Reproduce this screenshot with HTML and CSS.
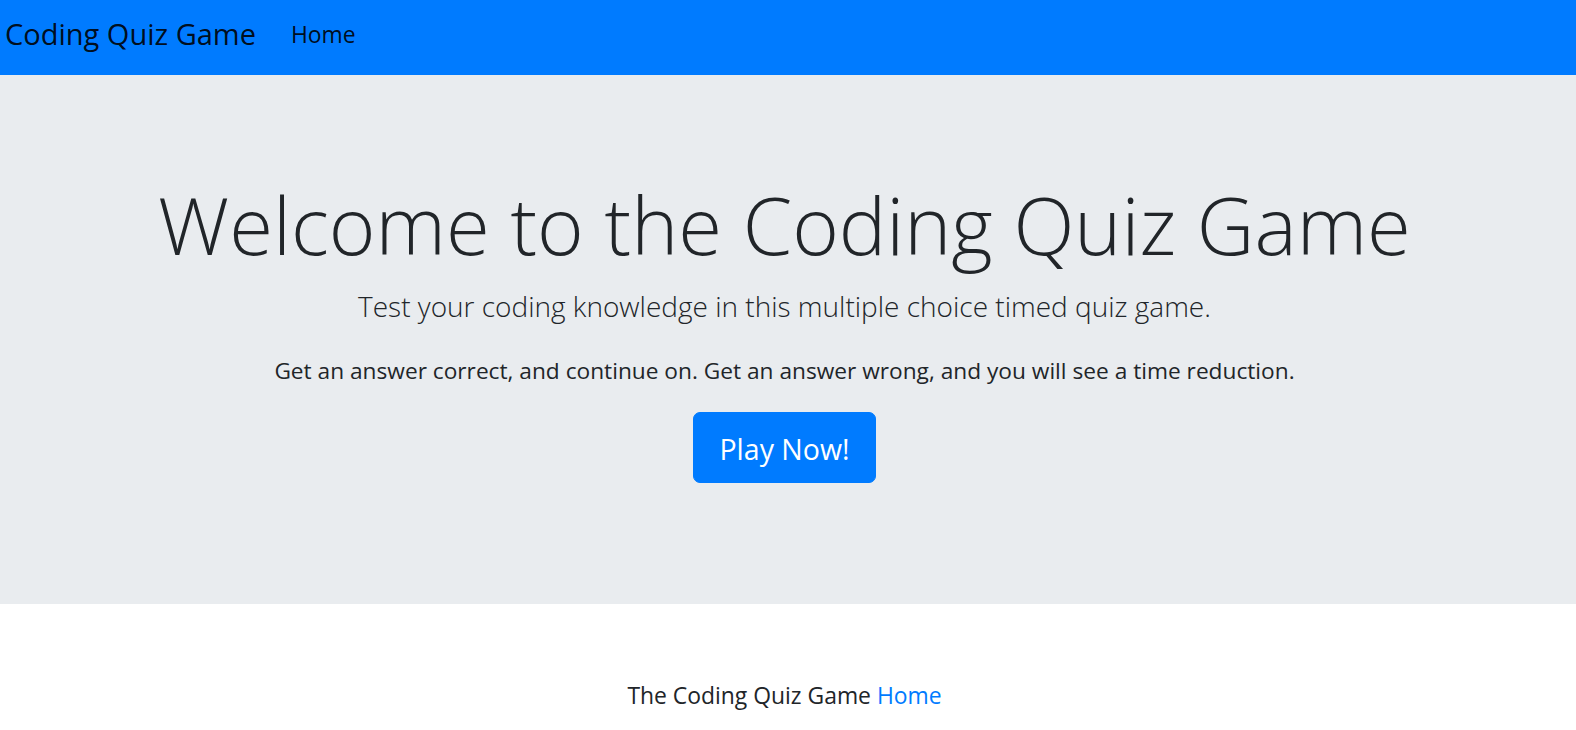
FILE: index.html
```html
<!DOCTYPE html>
<html lang="en">
<head>
<meta charset="utf-8">
<title>Coding Quiz Game</title>
<link rel="stylesheet" href="styles.css">
</head>
<body>
<nav class="navbar">
  <a class="navbar-brand" href="#">Coding Quiz Game</a>
  <ul class="navbar-nav">
    <li class="nav-item"><a class="nav-link" href="#">Home</a></li>
  </ul>
</nav>
<main class="jumbotron">
  <div class="jumbo-inner">
    <h1 class="display">Welcome to the Coding Quiz Game</h1>
    <p class="lead">Test your coding knowledge in this multiple choice timed quiz game.</p>
    <p class="info">Get an answer correct, and continue on. Get an answer wrong, and you will see a time reduction.</p>
    <p class="action"><a class="btn-play" href="#">Play Now!</a></p>
  </div>
</main>
<footer class="footer">
  <p class="footer-text">The Coding Quiz Game <a class="footer-link" href="#">Home</a></p>
</footer>
</body>
</html>
```
FILE: styles.css
```css
html, body {
  margin: 0;
  padding: 0;
}
body {
  font-family: "Open Sans", "Noto Sans", sans-serif;
  color: #212529;
  background: #fff;
  font-size: 22.7px;
}
a {
  text-decoration: none;
}

/* navbar */
.navbar {
  display: flex;
  align-items: flex-start;
  height: 75px;
  background: #007bff;
  padding: 0 0 0 5px;
  box-sizing: border-box;
}
.navbar-brand {
  font-size: 29px;
  line-height: 43px;
  padding-top: 12px;
  margin-right: 23px;
  color: rgba(0, 0, 0, 0.9);
  white-space: nowrap;
}
.navbar-nav {
  list-style: none;
  margin: 0;
  padding: 0;
  display: flex;
}
.nav-link {
  display: block;
  font-size: 22.9px;
  line-height: 34px;
  padding: 18px 12px 0;
  color: rgba(0, 0, 0, 0.9);
}

/* jumbotron */
.jumbotron {
  display: block;
  background: #e9ecef;
  padding: 101px 7px 97px 0;
}
.jumbo-inner {
  text-align: center;
}
.display {
  font-size: 79.7px;
  font-weight: 300;
  line-height: 96px;
  margin: 0 0 13px;
  white-space: nowrap;
}
.lead {
  font-size: 28px;
  font-weight: 300;
  line-height: 42px;
  margin: 0 0 27px;
}
.info {
  font-size: 22.7px;
  line-height: 34px;
  margin: 0 0 24px;
}
.action {
  margin: 0 0 24px;
  line-height: 0;
}
.btn-play {
  display: inline-block;
  font-size: 28.5px;
  line-height: 45px;
  padding: 14px 25px 10px;
  color: #fff;
  background: #007bff;
  border: 1px solid #007bff;
  border-radius: 7px;
}

/* footer */
.footer {
  padding: 75px 7px 0 0;
  text-align: center;
}
.footer-text {
  font-size: 22.9px;
  line-height: 34px;
  margin: 0;
}
.footer-link {
  color: #007bff;
}
```
